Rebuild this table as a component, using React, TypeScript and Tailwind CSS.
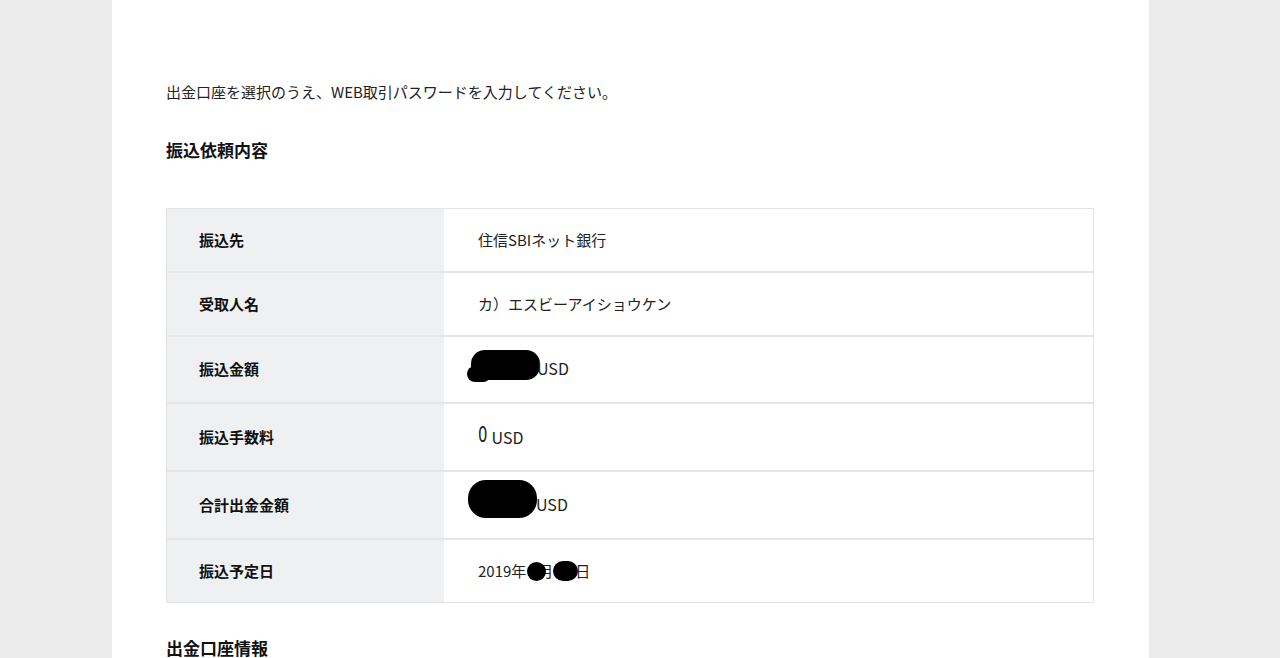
import React from "react";

const font = { fontFamily: '"Noto Sans CJK JP", "Noto Sans", sans-serif' };

const rows: { label: string; h: string; value: React.ReactNode }[] = [
  { label: "振込先", h: "h-[62px]", value: <span>住信SBIネット銀行</span> },
  { label: "受取人名", h: "h-[64px]", value: <span>カ）エスビーアイショウケン</span> },
  {
    label: "振込金額",
    h: "h-[67px]",
    value: (
      <span className="flex items-end">
        <span className="relative top-[-4px] inline-block w-[70px] h-[32px] ml-[-11px]">
          <span className="absolute left-[4px] top-0 w-[69px] h-[30px] bg-black rounded-[14px]" />
          <span className="absolute left-0 top-[16px] w-[24px] h-[16px] bg-black rounded-full" />
        </span>
        <span className="relative mb-[6px] text-[16px]">USD</span>
      </span>
    ),
  },
  {
    label: "振込手数料",
    h: "h-[68px]",
    value: (
      <span className="relative top-[-2px] flex items-end">
        <span
          className="text-[22px] leading-[22px] font-light"
          style={{ fontFamily: '"DejaVu Sans Condensed", "DejaVu Sans", sans-serif', transform: "scaleX(0.75)", display: "inline-block", transformOrigin: "left" }}
        >
          0
        </span>
        <span className="ml-[1px] text-[16px] leading-[18px]">USD</span>
      </span>
    ),
  },
  {
    label: "合計出金金額",
    h: "h-[68px]",
    value: (
      <span className="flex items-end">
        <span className="relative top-[-6px] inline-block w-[68px] h-[40px] ml-[-10px]">
          <span className="absolute left-0 top-[1px] w-[69px] h-[38px] bg-black rounded-[18px]" />
        </span>
        <span className="relative mb-[9px] text-[16px]">USD</span>
      </span>
    ),
  },
  {
    label: "振込予定日",
    h: "h-[64px]",
    value: (
      <span className="flex items-center">
        <span>2019年</span>
        <span className="relative inline-block w-[12px] h-[20px]">
          <span className="absolute left-[1px] top-[1px] w-[19px] h-[19px] bg-black rounded-full" />
        </span>
        <span>月</span>
        <span className="relative inline-block w-[22px] h-[20px]">
          <span className="absolute left-0 top-0 w-[25px] h-[20px] bg-black rounded-full" />
        </span>
        <span>日</span>
      </span>
    ),
  },
];

export default function App() {
  return (
    <div className="min-h-[658px] bg-[#ececec] text-[#222]" style={font}>
      <div className="ml-[112px] w-[1037px] h-[658px] bg-white pl-[54px] pr-[55px] pt-[81px] overflow-hidden">
        <p className="text-[15px] leading-[22px] text-[#222]">
          出金口座を選択のうえ、WEB取引パスワードを入力してください。
        </p>
        <h2 className="mt-[35px] text-[17px] leading-[24px] font-bold text-[#111]">振込依頼内容</h2>
        <div className="mt-[46px] w-[928px] border border-[#e3e3e3]">
          {rows.map((r, i) => (
            <div
              key={r.label}
              className={`flex ${r.h} ${i > 0 ? "border-t-2 border-[#e6e6e6]" : ""}`}
            >
              <div className="w-[279px] bg-[#eff0f2] flex items-center pl-[32px] text-[15px] font-bold text-[#111] border-r-2 border-white">
                {r.label}
              </div>
              <div className="flex-1 flex items-center pl-[32px] text-[15px] text-[#222]">{r.value}</div>
            </div>
          ))}
        </div>
        <h2 className="mt-[33px] text-[17px] leading-[24px] font-bold text-[#111]">出金口座情報</h2>
      </div>
    </div>
  );
}
